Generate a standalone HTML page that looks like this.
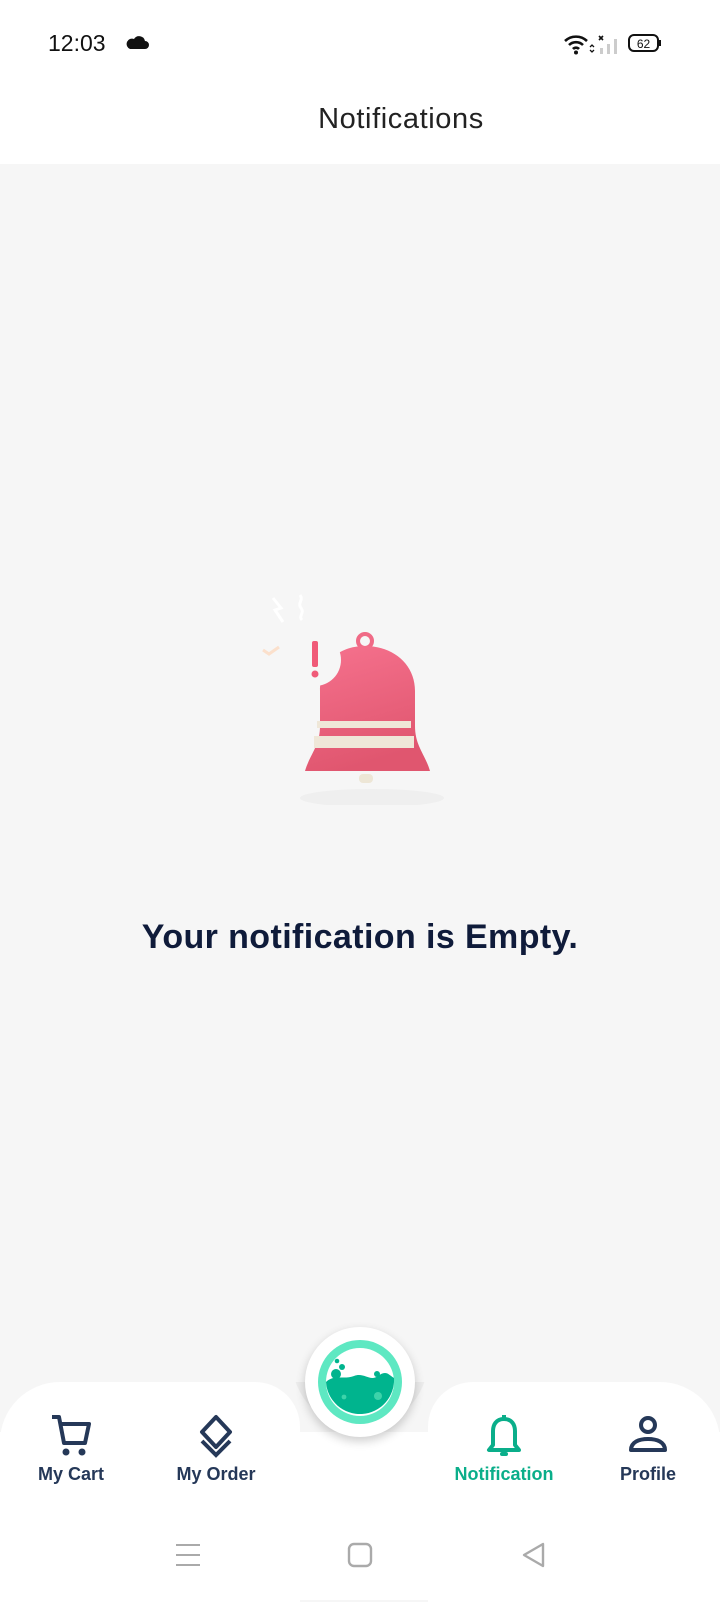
<!DOCTYPE html>
<html><head><meta charset="utf-8"><style>
*{margin:0;padding:0;box-sizing:border-box}
body{width:720px;height:1600px;background:#f6f6f6;font-family:"Liberation Sans",sans-serif;position:relative;overflow:hidden}
.abs{position:absolute}
.lbl{position:absolute;top:1464px;font-weight:bold;font-size:18px;color:#253858;transform:translateX(-50%);white-space:nowrap}
</style></head><body>
<div class="abs" style="left:0;top:0;width:720px;height:164px;background:#fff"></div>
<div class="abs" style="left:48px;top:30px;font-size:23px;color:#111">12:03</div>
<svg class="abs" style="left:126px;top:34px" width="24" height="16" viewBox="0 0 24 16"><path d="M4 15h15a4 4 0 0 0 0-8 6 6 0 0 0-11-2 5 5 0 0 0-4 10z" fill="#111"/></svg>
<svg class="abs" style="left:563px;top:32px" width="115" height="24" viewBox="0 0 115 24">
<path d="M2 9a16 16 0 0 1 22 0M6 13a10 10 0 0 1 14 0M10 17a4 4 0 0 1 6 0" stroke="#111" stroke-width="2.6" fill="none"/><circle cx="13" cy="20.5" r="2" fill="#111"/>
<path d="M27 15l2-2 2 2M27 18l2 2 2-2" stroke="#111" stroke-width="1.3" fill="none"/>
<path d="M36 4l4 4M40 4l-4 4" stroke="#111" stroke-width="1.6"/>
<rect x="37" y="16" width="3" height="6" fill="#ccc"/><rect x="44" y="12" width="3" height="10" fill="#ccc"/><rect x="51" y="7" width="3" height="15" fill="#ccc"/>
<rect x="66" y="3" width="29" height="16" rx="5" fill="none" stroke="#111" stroke-width="2"/><rect x="96" y="8" width="2" height="6" fill="#111"/>
<text x="80.5" y="16" font-size="12" text-anchor="middle" fill="#111" font-family="Liberation Sans">62</text></svg>
<div class="abs" style="left:0;width:802px;top:103px;text-align:center;font-size:29px;letter-spacing:0.6px;color:#222">Notifications</div>

<svg class="abs" style="left:240px;top:575px" width="220" height="230" viewBox="230 565 220 230">
<defs><linearGradient id="g" x1="0" y1="0" x2="0.3" y2="1"><stop offset="0" stop-color="#f6728e"/><stop offset="1" stop-color="#e0566f"/></linearGradient></defs>
<ellipse cx="362" cy="788" rx="72" ry="9" fill="#efefef"/>
<path d="M263 588l8 10-6 2 8 12M290 585c4 5-3 8 1 13s-3 8 1 12" stroke="#fff" stroke-width="3" fill="none"/>
<path d="M253 640l6 4 10-7" stroke="#fbe0cc" stroke-width="3" fill="none"/>
<rect x="349" y="764" width="14" height="9" rx="4" fill="#ede6d6"/>
<circle cx="355" cy="631" r="7" fill="none" stroke="#f06a86" stroke-width="4"/>
<path d="M355 636c-28 0-45 18-45 45v35c0 20-10 28-15 45h125c-5-17-15-25-15-45v-35c0-27-22-45-50-45z" fill="url(#g)"/>
<rect x="307" y="711" width="94" height="7" fill="#efe7d8"/>
<rect x="304" y="726" width="100" height="12" fill="#efe7d8"/>
<circle cx="305" cy="650" r="26" fill="#f6f6f6"/>
<rect x="302" y="631" width="6" height="26" rx="2" fill="#f05a78"/><circle cx="305" cy="664" r="3.5" fill="#f05a78"/>
</svg>

<div class="abs" style="left:0;width:720px;top:918px;text-align:center;font-size:34px;letter-spacing:0.4px;font-weight:bold;color:#0f1b3a">Your notification is Empty.</div>

<div class="abs" style="left:0;top:1382px;width:300px;height:220px;background:#fff;border-radius:60px 45px 0 0"></div>
<div class="abs" style="left:428px;top:1382px;width:292px;height:220px;background:#fff;border-radius:45px 60px 0 0"></div>
<div class="abs" style="left:0;top:1432px;width:720px;height:168px;background:#fff"></div>
<div class="abs" style="left:290px;top:1382px;width:140px;height:50px;overflow:hidden">
<div style="position:absolute;left:2px;top:-90px;width:136px;height:136px;border-radius:50%;background:#ececec"></div></div>
<div class="abs" style="left:305px;top:1327px;width:110px;height:110px;border-radius:50%;background:#fff;box-shadow:0 4px 10px rgba(0,0,0,.2)"></div>
<svg class="abs" style="left:314px;top:1336px" width="92" height="92" viewBox="0 0 92 92">
<circle cx="46" cy="46" r="42" fill="#5ee8c2"/><circle cx="46" cy="46" r="34" fill="#fff"/>
<path d="M12 46c8-8 18-2 28-6s16 6 24 0 10-2 16 2a34 34 0 0 1-68 4z" fill="#00b48e"/>
<circle cx="22" cy="38" r="5" fill="#00b48e"/><circle cx="28" cy="31" r="3" fill="#00b48e"/><circle cx="23" cy="25" r="2.3" fill="#00b48e"/><circle cx="63" cy="38" r="3" fill="#00b48e"/>
<circle cx="64" cy="60" r="4" fill="#3dd3aa"/><circle cx="30" cy="61" r="2.4" fill="#3dd3aa"/></svg>

<svg class="abs" style="left:50px;top:1414px" width="42" height="44" viewBox="0 0 42 44"><path d="M2 3h7l5 26h21l4-19H11" stroke="#253858" stroke-width="4" fill="none" stroke-linejoin="round"/><circle cx="16" cy="38" r="3.5" fill="#253858"/><circle cx="32" cy="38" r="3.5" fill="#253858"/></svg>
<svg class="abs" style="left:196px;top:1414px" width="40" height="44" viewBox="0 0 40 44"><path d="M20 3l14 15-14 15L6 18z" stroke="#253858" stroke-width="4" fill="none" stroke-linejoin="round"/><path d="M6 27l14 14 14-14" stroke="#253858" stroke-width="4" fill="none"/></svg>
<svg class="abs" style="left:486px;top:1414px" width="36" height="46" viewBox="0 0 36 46"><path d="M18 5c-8 0-11 6-11 12v14l-4 5h30l-4-5V17c0-6-3-12-11-12z" stroke="#0aae8a" stroke-width="4" fill="none" stroke-linejoin="round"/><rect x="16" y="1" width="4" height="6" fill="#0aae8a"/><rect x="14" y="38" width="8" height="4" rx="2" fill="#0aae8a"/></svg>
<svg class="abs" style="left:628px;top:1414px" width="40" height="44" viewBox="0 0 40 44"><circle cx="20" cy="11" r="7" stroke="#253858" stroke-width="4" fill="none"/><path d="M3 36c0-8 8-11 17-11s17 3 17 11z" stroke="#253858" stroke-width="4" fill="none" stroke-linejoin="round"/></svg>
<div class="lbl" style="left:71px">My Cart</div>
<div class="lbl" style="left:216px">My Order</div>
<div class="lbl" style="left:504px;color:#0aae8a">Notification</div>
<div class="lbl" style="left:648px">Profile</div>

<svg class="abs" style="left:0;top:1535px" width="720" height="40" viewBox="0 0 720 40">
<path d="M176 10h24M176 20h24M176 30h24" stroke="#aaa" stroke-width="2"/>
<rect x="349" y="9" width="22" height="22" rx="5" fill="none" stroke="#aaa" stroke-width="2.4"/>
<path d="M543 9v22l-19-11z" fill="none" stroke="#aaa" stroke-width="2.4" stroke-linejoin="round"/>
</svg>
</body></html>
